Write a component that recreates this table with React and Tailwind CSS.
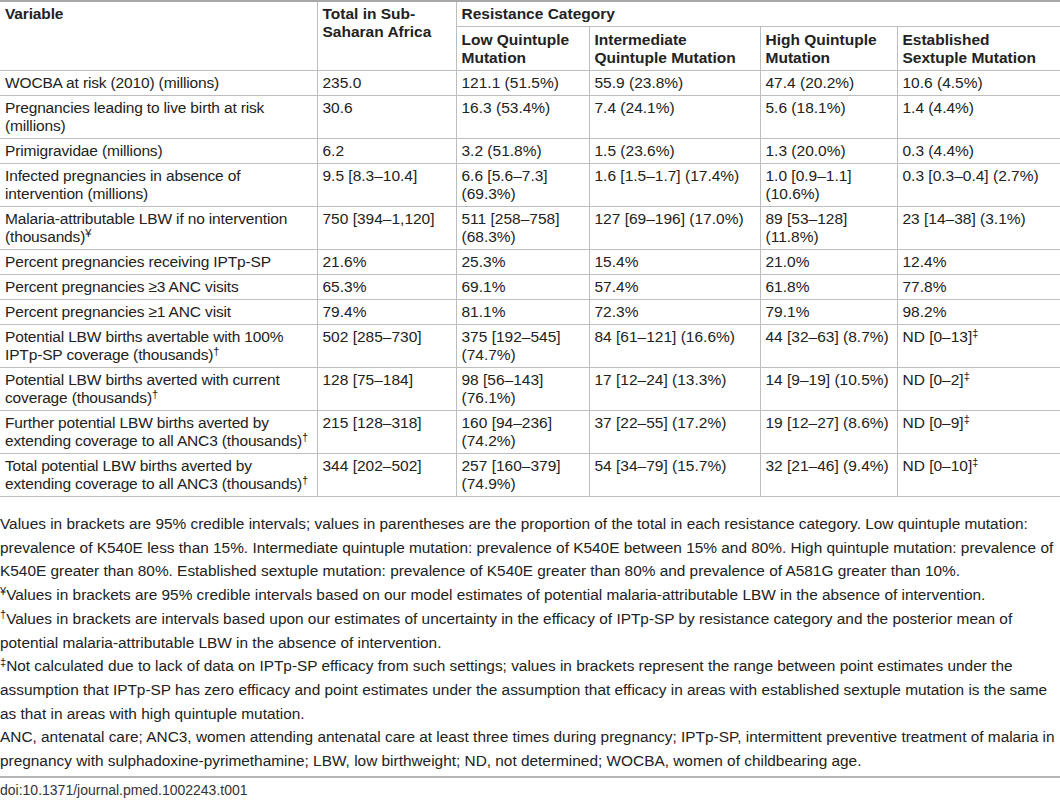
import React from "react";

const D = () => <sup className="text-[11px]">†</sup>;
const DD = () => <sup className="text-[11px]">‡</sup>;

const rows = [
  ["WOCBA at risk (2010) (millions)", "235.0", "121.1 (51.5%)", "55.9 (23.8%)", "47.4 (20.2%)", "10.6 (4.5%)"],
  ["Pregnancies leading to live birth at risk (millions)", "30.6", "16.3 (53.4%)", "7.4 (24.1%)", "5.6 (18.1%)", "1.4 (4.4%)"],
  ["Primigravidae (millions)", "6.2", "3.2 (51.8%)", "1.5 (23.6%)", "1.3 (20.0%)", "0.3 (4.4%)"],
  ["Infected pregnancies in absence of intervention (millions)", "9.5 [8.3–10.4]", "6.6 [5.6–7.3] (69.3%)", "1.6 [1.5–1.7] (17.4%)", "1.0 [0.9–1.1] (10.6%)", "0.3 [0.3–0.4] (2.7%)"],
  [<>Malaria-attributable LBW if no intervention (thousands)<sup className="text-[11px]">¥</sup></>, "750 [394–1,120]", "511 [258–758] (68.3%)", "127 [69–196] (17.0%)", "89 [53–128] (11.8%)", "23 [14–38] (3.1%)"],
  ["Percent pregnancies receiving IPTp-SP", "21.6%", "25.3%", "15.4%", "21.0%", "12.4%"],
  ["Percent pregnancies ≥3 ANC visits", "65.3%", "69.1%", "57.4%", "61.8%", "77.8%"],
  ["Percent pregnancies ≥1 ANC visit", "79.4%", "81.1%", "72.3%", "79.1%", "98.2%"],
  [<>Potential LBW births avertable with 100% IPTp-SP coverage (thousands)<D /></>, "502 [285–730]", "375 [192–545] (74.7%)", "84 [61–121] (16.6%)", "44 [32–63] (8.7%)", <>ND [0–13]<DD /></>],
  [<>Potential LBW births averted with current coverage (thousands)<D /></>, "128 [75–184]", "98 [56–143] (76.1%)", "17 [12–24] (13.3%)", "14 [9–19] (10.5%)", <>ND [0–2]<DD /></>],
  [<>Further potential LBW births averted by extending coverage to all ANC3 (thousands)<D /></>, "215 [128–318]", "160 [94–236] (74.2%)", "37 [22–55] (17.2%)", "19 [12–27] (8.6%)", <>ND [0–9]<DD /></>],
  [<>Total potential LBW births averted by extending coverage to all ANC3 (thousands)<D /></>, "344 [202–502]", "257 [160–379] (74.9%)", "54 [34–79] (15.7%)", "32 [21–46] (9.4%)", <>ND [0–10]<DD /></>],
];

const cell = "border border-[#bdbdbd] pl-[5px] pr-[3px] pt-[3px] pb-[3px] align-top leading-[18px]";
const first = "border-l-0 pl-[2px] pr-0 tracking-[-0.15px]";
const last = "border-r-0 pr-[7px]";

export default function App() {
  return (
    <div className="w-[1060px] h-[800px] overflow-hidden bg-white font-['Liberation_Sans',Arial,sans-serif] text-[#222]">
      <table className="w-full table-fixed border-collapse border-t-2 border-[#a8a8a8] text-[15.5px]">
        <colgroup>
          <col className="w-[317px]" />
          <col className="w-[139px]" />
          <col className="w-[133px]" />
          <col className="w-[171px]" />
          <col className="w-[137px]" />
          <col />
        </colgroup>
        <thead className="font-bold">
          <tr>
            <th rowSpan={2} className={`${cell} ${first} text-left`}>Variable</th>
            <th rowSpan={2} className={`${cell} text-left`}>Total in Sub-Saharan Africa</th>
            <th colSpan={4} className={`${cell} ${last} text-left pt-[2px]`}>Resistance Category</th>
          </tr>
          <tr>
            <th className={`${cell} text-left pt-[4px] pb-[2px]`}>Low Quintuple Mutation</th>
            <th className={`${cell} text-left pt-[4px] pb-[2px]`}>Intermediate Quintuple Mutation</th>
            <th className={`${cell} text-left pt-[4px] pb-[2px]`}>High Quintuple Mutation</th>
            <th className={`${cell} ${last} text-left pt-[4px] pb-[2px]`}>Established Sextuple Mutation</th>
          </tr>
        </thead>
        <tbody>
          {rows.map((r, i) => (
            <tr key={i}>
              {r.map((c, j) => (
                <td key={j} className={`${cell} ${j === 0 ? first : ""} ${j === 5 ? last : ""}`}>{c}</td>
              ))}
            </tr>
          ))}
        </tbody>
      </table>
      <div className="mt-[15px] text-[15.4px] leading-[23.7px]">
        <p>Values in brackets are 95% credible intervals; values in parentheses are the proportion of the total in each resistance category. Low quintuple mutation: prevalence of K540E less than 15%. Intermediate quintuple mutation: prevalence of K540E between 15% and 80%. High quintuple mutation: prevalence of K540E greater than 80%. Established sextuple mutation: prevalence of K540E greater than 80% and prevalence of A581G greater than 10%.</p>
        <p><sup className="text-[11px]">¥</sup>Values in brackets are 95% credible intervals based on our model estimates of potential malaria-attributable LBW in the absence of intervention.</p>
        <p><D />Values in brackets are intervals based upon our estimates of uncertainty in the efficacy of IPTp-SP by resistance category and the posterior mean of potential malaria-attributable LBW in the absence of intervention.</p>
        <p><DD />Not calculated due to lack of data on IPTp-SP efficacy from such settings; values in brackets represent the range between point estimates under the assumption that IPTp-SP has zero efficacy and point estimates under the assumption that efficacy in areas with established sextuple mutation is the same as that in areas with high quintuple mutation.</p>
        <p>ANC, antenatal care; ANC3, women attending antenatal care at least three times during pregnancy; IPTp-SP, intermittent preventive treatment of malaria in pregnancy with sulphadoxine-pyrimethamine; LBW, low birthweight; ND, not determined; WOCBA, women of childbearing age.</p>
      </div>
      <div className="mt-[3px] border-t-2 border-[#b5b5b5] pt-[3px] text-[14px] leading-[18px] font-['Liberation_Sans_Narrow','Liberation_Sans',Arial,sans-serif] text-[#333]">
        doi:10.1371/journal.pmed.1002243.t001
      </div>
    </div>
  );
}
